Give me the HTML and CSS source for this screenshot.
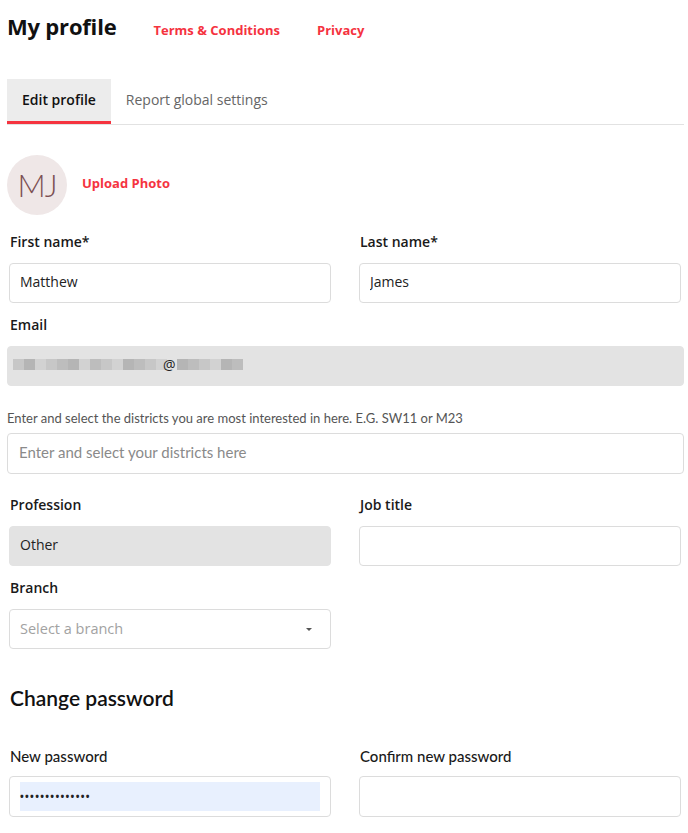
FILE: index.html
```html
<!DOCTYPE html>
<html lang="en">
<head>
    <meta charset="UTF-8">
    <meta name="viewport" content="width=device-width, initial-scale=1.0">
    <title>My profile</title>
    <link rel="stylesheet" href="styles.css">
</head>
<body>
    <div class="page">
        <div class="header">
            <h1>My profile</h1>
            <a href="#">Terms &amp; Conditions</a>
            <a href="#">Privacy</a>
        </div>

        <div class="tabs">
            <div class="tab active">Edit profile</div>
            <div class="tab">Report global settings</div>
        </div>

        <div class="photo-row">
            <div class="avatar">MJ</div>
            <a href="#" class="upload">Upload Photo</a>
        </div>

        <div class="row first">
            <div class="field">
                <label>First name*</label>
                <input type="text" value="Matthew">
            </div>
            <div class="field">
                <label>Last name*</label>
                <input type="text" value="James">
            </div>
        </div>

        <div class="row single">
            <div class="field">
                <label>Email</label>
            </div>
        </div>
        <div class="box disabled email">
            <div class="blur">
                <span class="px p1"></span><span class="px p2"></span><span class="px p3"></span><span class="px p1"></span>
                <span class="px p4"></span><span class="px p2"></span><span class="px p3"></span><span class="px p4"></span>
                <span class="px p1"></span><span class="px p3"></span><span class="px p2"></span><span class="px p4"></span>
                <span class="px p1"></span><span class="px p3"></span>
                <span class="at">@</span>
                <span class="px p2"></span><span class="px p4"></span><span class="px p1"></span><span class="px p3"></span>
                <span class="px p2"></span><span class="px p4"></span>
            </div>
        </div>

        <p class="help">Enter and select the districts you are most interested in here. E.G. SW11 or M23</p>
        <input type="text" class="districts" placeholder="Enter and select your districts here">

        <div class="row second">
            <div class="field">
                <label>Profession</label>
                <input type="text" value="Other" class="disabled" readonly>
            </div>
            <div class="field">
                <label>Job title</label>
                <input type="text">
            </div>
        </div>

        <div class="row">
            <div class="field">
                <label>Branch</label>
                <div class="box select">
                    <span class="placeholder">Select a branch</span>
                    <span class="caret"></span>
                </div>
            </div>
        </div>

        <h2>Change password</h2>

        <div class="row password">
            <div class="field">
                <label>New password</label>
                <div class="box">
                    <div class="autofill">••••••••••••••</div>
                </div>
            </div>
            <div class="field">
                <label>Confirm new password</label>
                <div class="box"></div>
            </div>
        </div>
    </div>
</body>
</html>
```

FILE: styles.css
```css
body {
    margin: 0;
    padding: 0;
    background-color: white;
    color: #1a1a1a;
    font-family: "Open Sans", Arial, sans-serif;
}

.page {
    width: 677px;
    padding-left: 7px;
}

.header {
    display: flex;
    align-items: baseline;
    gap: 37px;
    height: 55px;
}

.header h1 {
    margin: 0;
    font-size: 22px;
    font-weight: 700;
    line-height: 52px;
    letter-spacing: -0.2px;
    color: #111;
}

.header a,
.upload {
    color: #f5333f;
    font-size: 13px;
    font-weight: 700;
    text-decoration: none;
}

.tabs {
    display: flex;
    margin-top: 24px;
    border-bottom: 1px solid #e2e2e2;
}

.tab {
    padding: 0 15px;
    line-height: 42px;
    font-size: 14px;
    color: #666;
    border-bottom: 3px solid transparent;
}

.tab.active {
    background-color: #ececec;
    color: #111;
    font-weight: 600;
    border-bottom-color: #f5333f;
}

.photo-row {
    display: flex;
    align-items: center;
    margin-top: 30px;
}

.avatar {
    width: 60px;
    height: 60px;
    border-radius: 50%;
    background-color: #efe7e7;
    color: #7c5053;
    font-family: "Lato", sans-serif;
    font-size: 31px;
    font-weight: 300;
    display: flex;
    align-items: center;
    justify-content: center;
    letter-spacing: -1px;
}

.upload {
    margin-left: 15px;
    margin-top: -4px;
}

.row {
    display: grid;
    grid-template-columns: 322px 322px;
    column-gap: 28px;
    padding: 0 3px 0 2px;
    margin-top: 13px;
}

.row.first {
    margin-top: 18px;
}

.row.second {
    margin-top: 22px;
}

.field {
    display: flex;
    flex-direction: column;
}

label {
    font-size: 14px;
    font-weight: 600;
    line-height: 18px;
    margin-bottom: 12px;
    margin-left: 1px;
    color: #1a1a1a;
}

input,
.box {
    box-sizing: border-box;
    height: 40px;
    border: 1px solid #dcdcdc;
    border-radius: 4px;
    padding: 0 10px 3px 10px;
    font-family: "Open Sans", Arial, sans-serif;
    font-size: 14px;
    color: #222;
    background-color: white;
    outline: none;
}

.disabled {
    background-color: #e3e3e3;
    border-color: #e3e3e3;
}

.email {
    width: 677px;
    display: flex;
    align-items: center;
    padding-left: 5px;
}

.blur {
    display: flex;
    align-items: center;
    height: 14px;
}

.px {
    display: inline-block;
    width: 11px;
    height: 11px;
}

.p1 { background-color: #c7c7c7; }
.p2 { background-color: #b5b5b5; }
.p3 { background-color: #d2d2d2; }
.p4 { background-color: #bdbdbd; }

.at {
    font-size: 14px;
    color: #222;
    margin: 0 1px 0 -4px;
    line-height: 14px;
}

.help {
    font-family: "Lato", sans-serif;
    font-size: 13px;
    color: #555;
    margin: 23px 0 6px 0;
    line-height: 18px;
}

.districts {
    width: 677px;
    height: 41px;
    padding-left: 11px;
    font-family: "Lato", sans-serif;
    font-size: 15px;
}

.districts::placeholder {
    color: #8a8a8a;
}

.select {
    display: flex;
    align-items: center;
    justify-content: space-between;
    padding-right: 18px;
    padding-bottom: 1px;
}

.placeholder {
    color: #a2a2a2;
    font-size: 14.5px;
}

.caret {
    width: 0;
    height: 0;
    margin-top: 2px;
    border-left: 3px solid transparent;
    border-right: 3px solid transparent;
    border-top: 3px solid #555;
}

h2 {
    font-family: "Lato", sans-serif;
    font-size: 21px;
    font-weight: 600;
    margin: 36px 0 0 3px;
    line-height: 26px;
    color: #111;
}

.row.password {
    margin-top: 36px;
}

.password label {
    font-family: "Lato", sans-serif;
    font-size: 15px;
    font-weight: 500;
    margin-bottom: 11px;
}

.password .box {
    height: 41px;
    display: flex;
    align-items: center;
    padding-bottom: 0;
}

.autofill {
    flex: 1;
    height: 29px;
    background-color: #e8f0fe;
    font-size: 10px;
    font-weight: 700;
    line-height: 29px;
    letter-spacing: 1.3px;
    color: #222;
}
```
